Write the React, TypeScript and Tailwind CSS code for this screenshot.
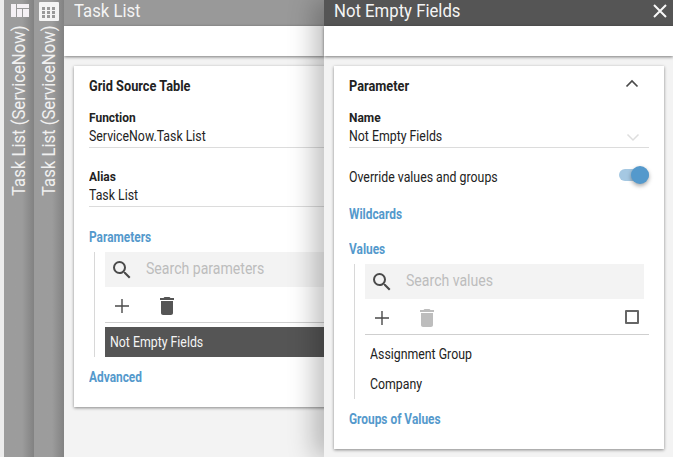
import { FC, ReactNode } from "react";

// Roboto is only installed in its normal width, the screen uses the condensed cut
const Narrow: FC<{ children: ReactNode; bold?: boolean }> = ({ children, bold }) => (
  <span className={`inline-block whitespace-nowrap origin-left ${bold ? "scale-x-[0.85]" : "scale-x-[0.88]"}`}>{children}</span>
);

const SearchIcon = () => (
  <svg width="24" height="24" viewBox="0 0 24 24" fill="#4a4a4a">
    <path d="M15.5 14h-.79l-.28-.27A6.47 6.47 0 0 0 16 9.5 6.5 6.5 0 1 0 9.5 16c1.61 0 3.09-.59 4.23-1.57l.27.28v.79l5 4.99L20.49 19l-4.99-5zm-6 0C7.01 14 5 11.99 5 9.5S7.01 5 9.5 5 14 7.01 14 9.5 11.99 14 9.5 14z" />
  </svg>
);

const PlusIcon = () => (
  <svg width="24" height="24" viewBox="0 0 24 24" fill="#4a4a4a">
    <path d="M19 12.7h-6.300V19h-1.400v-6.300H5v-1.400h6.300V5h1.400v6.300H19z" />
  </svg>
);

const TrashIcon: FC<{ color: string }> = ({ color }) => (
  <svg width="24" height="24" viewBox="0 0 24 24" fill={color}>
    <path d="M6 19c0 1.100.9 2 2 2h8c1.100 0 2-.9 2-2V7H6v12zM19 4h-3.500l-1-1h-5l-1 1H5v2h14V4z" />
  </svg>
);

const Field: FC<{ label: string; value: string; children?: ReactNode }> = ({ label, value, children }) => (
  <div className="border-b border-[#dcdcdc] h-[39px]">
    <div className="text-[13px] leading-[17px] font-bold text-[#222]">
      <span className="inline-block origin-left scale-x-[0.92]">{label}</span>
    </div>
    <div className="flex items-center justify-between text-[14px] leading-[21px] text-[#222]">
      <Narrow>{value}</Narrow>
      {children}
    </div>
  </div>
);

const SectionLink: FC<{ label: string }> = ({ label }) => (
  <div className="text-[14px] leading-[20px] font-bold text-[#5499cc]">
    <Narrow bold>{label}</Narrow>
  </div>
);

const SearchBox: FC<{ placeholder: string }> = ({ placeholder }) => (
  <div className="flex items-center h-[35px] bg-[#f3f3f3] pl-[5px]">
    <SearchIcon />
    <span className="ml-[12px] pb-[2px] text-[16px] text-[#bdbdbd]">
      <Narrow>{placeholder}</Narrow>
    </span>
  </div>
);

const SideTab: FC<{ icon: ReactNode }> = ({ icon }) => (
  <div className="w-[30px] h-full flex flex-col items-center bg-gradient-to-r from-[#9c9c9c] from-60% to-[#828282]">
    <div className="h-[26px] flex items-start">{icon}</div>
    <div className="[writing-mode:vertical-rl] rotate-180 h-[170px] whitespace-nowrap text-[19px] leading-[24px] text-[#f0f0f0] text-left">
      <span className="inline-block origin-top scale-y-[0.88]">Task List (ServiceNow)</span>
    </div>
  </div>
);

const LayoutGlyph = () => (
  <svg width="18" height="17" viewBox="0 0 18 17" className="ml-[2px]">
    <rect x="0" y="4" width="18" height="13" fill="#f4f0f4" />
    <rect x="5" y="8" width="13" height="1" fill="#999" />
    <rect x="5" y="4" width="1" height="13" fill="#999" />
    <rect x="11" y="9" width="1" height="8" fill="#999" />
  </svg>
);

const GridGlyph = () => (
  <svg width="20" height="21" viewBox="0 0 20 21">
    <rect x="0" y="2" width="20" height="19" rx="1" fill="#f4f4f4" />
    <g fill="#999">
      {[7, 11, 15].map((y) =>
        [3, 8, 13].map((x) => <rect key={`${x}-${y}`} x={x} y={y} width="3" height="3" />),
      )}
    </g>
  </svg>
);

export default function App() {
  return (
    <div className="font-['Roboto',sans-serif] w-[673px] h-[457px] flex overflow-hidden bg-[#f3f3f3]">
      <div className="w-[4px] bg-[#ececec]" />
      <SideTab icon={<LayoutGlyph />} />
      <SideTab icon={<GridGlyph />} />

      {/* underlying panel */}
      <div className="w-[260px] h-full flex flex-col shrink-0 overflow-hidden">
        <div className="h-[26px] bg-[#999] pl-[10px] text-[19px] leading-[22px] text-[#f4f4f4]">
          <Narrow>Task List</Narrow>
        </div>
        <div className="h-[30px] bg-white shadow-[0_1px_3px_rgba(0,0,0,0.5)]" />
        <div className="pl-[10px] pt-[10px]">
          <div className="w-[300px] h-[341px] bg-white shadow-[0_1px_3px_rgba(0,0,0,0.45)] pl-[15px] pr-[20px] pt-[10px]">
            <div className="text-[15px] leading-[20px] font-bold text-[#222]">
              <Narrow bold>Grid Source Table</Narrow>
            </div>
            <div className="mt-[13px]">
              <Field label="Function" value="ServiceNow.Task List" />
            </div>
            <div className="mt-[20px]">
              <Field label="Alias" value="Task List" />
            </div>
            <div className="mt-[20px]">
              <SectionLink label="Parameters" />
            </div>
            <div className="mt-[5px] ml-[5px] pl-[10px] border-l border-[#d8d8d8]">
              <SearchBox placeholder="Search parameters" />
              <div className="h-[36px] flex items-center gap-[21px] pl-[5px] pt-[2px] border-b border-[#cfcfcf]">
                <PlusIcon />
                <TrashIcon color="#555" />
              </div>
              <div className="mt-[4px] h-[30px] bg-[#555] pl-[5px] text-[14px] leading-[30px] text-[#f4f4f4]">
                <Narrow>Not Empty Fields</Narrow>
              </div>
            </div>
            <div className="mt-[10px]">
              <SectionLink label="Advanced" />
            </div>
          </div>
        </div>
      </div>

      {/* top panel */}
      <div className="relative w-[349px] h-full flex flex-col shrink-0 bg-[#f3f3f3] shadow-[-10px_0_24px_rgba(0,0,0,0.25)]">
        <div className="h-[26px] bg-[#555] pl-[10px] pr-[6px] flex items-start justify-between text-[19px] leading-[22px] text-[#f4f4f4]">
          <Narrow>Not Empty Fields</Narrow>
          <svg width="14" height="14" viewBox="0 0 14 14" className="mt-[4px]" stroke="#f8f8f8" strokeWidth="2">
            <path d="M1 1l12 12M13 1L1 13" />
          </svg>
        </div>
        <div className="h-[30px] bg-white shadow-[0_1px_3px_rgba(0,0,0,0.5)]" />
        <div className="pl-[10px] pr-[9px] pt-[10px]">
          <div className="h-[383px] bg-white shadow-[0_1px_3px_rgba(0,0,0,0.45)] pl-[15px] pr-[15px] pt-[10px]">
            <div className="flex justify-between text-[15px] leading-[20px] font-bold text-[#222]">
              <Narrow bold>Parameter</Narrow>
              <svg width="24" height="24" viewBox="0 0 24 24" fill="none" stroke="#4a4a4a" strokeWidth="1.7" className="mt-[-4px] mr-[5px]">
                <path d="M6.500 14.500L12 9l5.500 5.500" />
              </svg>
            </div>
            <div className="mt-[13px]">
              <Field label="Name" value="Not Empty Fields">
                <svg width="16" height="16" viewBox="0 0 16 16" fill="none" stroke="#dedede" strokeWidth="1.5" className="mr-[8px]">
                  <path d="M2.500 5.500L8 11l5.500-5.500" />
                </svg>
              </Field>
            </div>
            <div className="mt-[18px] flex items-center justify-between h-[20px]">
              <span className="pt-[2px] text-[14px] text-[#222]">
                <Narrow>Override values and groups</Narrow>
              </span>
              <div className="relative mt-[-2px] w-[30px] h-[12px] rounded-full bg-[#a5c8e2]">
                <div className="absolute right-0 top-[-3px] size-[18px] rounded-full bg-[#5499cc] shadow-[0_2px_4px_rgba(0,0,0,0.35)]" />
              </div>
            </div>
            <div className="mt-[18px]">
              <SectionLink label="Wildcards" />
            </div>
            <div className="mt-[15px]">
              <SectionLink label="Values" />
            </div>
            <div className="mt-[5px] ml-[5px] pl-[10px] border-l border-[#d8d8d8]">
              <div className="mr-[5px]">
                <SearchBox placeholder="Search values" />
              </div>
              <div className="h-[36px] flex items-center pl-[5px] pt-[2px] border-b border-[#cfcfcf]">
                <PlusIcon />
                <div className="ml-[21px]">
                  <TrashIcon color="#bdbdbd" />
                </div>
                <div className="ml-auto mr-[10px] mt-[-2px] size-[14px] border-2 border-[#666] rounded-[1px]" />
              </div>
              <div className="h-[30px] mt-[4px] pl-[5px] text-[14px] leading-[30px] text-[#222]">
                <Narrow>Assignment Group</Narrow>
              </div>
              <div className="h-[30px] pl-[5px] text-[14px] leading-[30px] text-[#222]">
                <Narrow>Company</Narrow>
              </div>
            </div>
            <div className="mt-[10px]">
              <SectionLink label="Groups of Values" />
            </div>
          </div>
        </div>
      </div>
    </div>
  );
}
